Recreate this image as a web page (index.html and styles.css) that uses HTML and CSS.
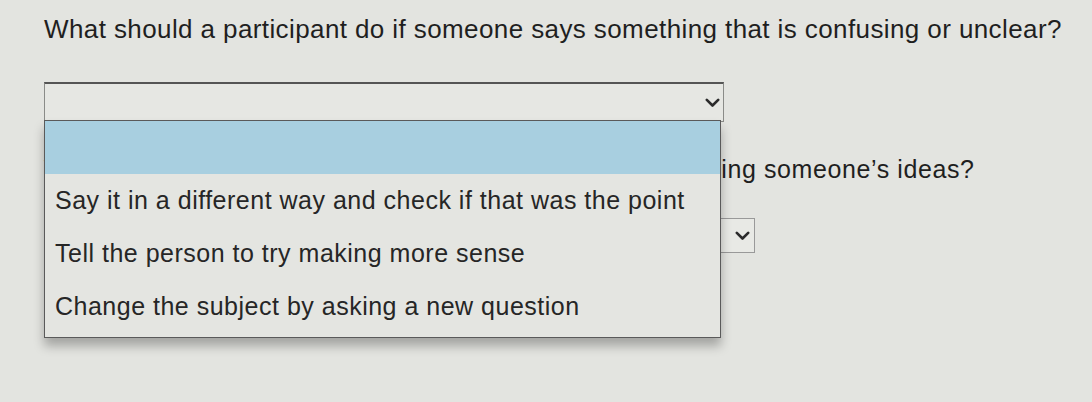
FILE: index.html
```html
<!DOCTYPE html>
<html>
<head>
<meta charset="utf-8">
<link rel="stylesheet" href="styles.css">
</head>
<body>
<main class="page">
  <section class="item">
    <p class="question">What should a participant do if someone says something that is confusing or unclear?</p>
    <div class="select select-1">
      <span class="value"></span>
      <svg class="chev" width="15" height="10" viewBox="0 0 15 10"><path d="M1.8 1.8 L7.5 7.5 L13.2 1.8" fill="none" stroke="#2b2b2b" stroke-width="2.6" stroke-linecap="round" stroke-linejoin="round"/></svg>
    </div>
    <ul class="listbox">
      <li class="opt opt-blank"></li>
      <li class="opt">Say it in a different way and check if that was the point</li>
      <li class="opt">Tell the person to try making more sense</li>
      <li class="opt">Change the subject by asking a new question</li>
    </ul>
  </section>
  <section class="item item-2">
    <p class="question q2">What is a good way to respond when someone is challenging someone’s ideas?</p>
    <div class="select select-2">
      <span class="value"></span>
      <svg class="chev" width="15" height="10" viewBox="0 0 15 10"><path d="M1.8 1.8 L7.5 7.5 L13.2 1.8" fill="none" stroke="#2b2b2b" stroke-width="2.6" stroke-linecap="round" stroke-linejoin="round"/></svg>
    </div>
  </section>
</main>
</body>
</html>
```
FILE: styles.css
```css
* { box-sizing: border-box; }
html, body { margin: 0; height: 100%; }
body {
  background: #e3e4e0;
  font-family: "Liberation Sans", Arial, sans-serif;
  color: #262626;
  overflow: hidden;
}
.page {
  padding: 12px 0 0 44px;
  position: relative;
}
.item { position: relative; }
.question {
  margin: 0;
  font-size: 26px;
  letter-spacing: 0.4px;
  line-height: 34px;
  color: #1f1f1f;
}
.select {
  display: flex;
  align-items: center;
  justify-content: flex-end;
  border: 1px solid #8a8b88;
  border-top: 2px solid #555;
  background: #e6e7e3;
}
.select-1 {
  margin-top: 36px;
  width: 680px;
  height: 40px;
  padding-right: 3px;
}
.chev { display: block; }
.listbox {
  position: absolute;
  left: 0;
  top: 108px;
  width: 677px;
  margin: 0;
  padding: 0 0 4px;
  list-style: none;
  background: #e4e5e1;
  border: 1.5px solid #5a5a5a;
  box-shadow: 0 8px 10px rgba(0,0,0,0.28);
  z-index: 2;
}
.opt {
  height: 53px;
  display: flex;
  align-items: center;
  padding-left: 10px;
  font-size: 25px;
  letter-spacing: 0.5px;
  color: #262626;
}
.opt-blank {
  background: #a8cfe0;
}
.item-2 {
  margin-top: 30px;
}
.q2 {
  font-size: 25px;
  letter-spacing: 0.6px;
}
.select-2 {
  margin-top: 32px;
  width: 711px;
  height: 35px;
  padding-right: 4px;
  border: 1px solid #999;
  background: #e8e9e5;
}
```
